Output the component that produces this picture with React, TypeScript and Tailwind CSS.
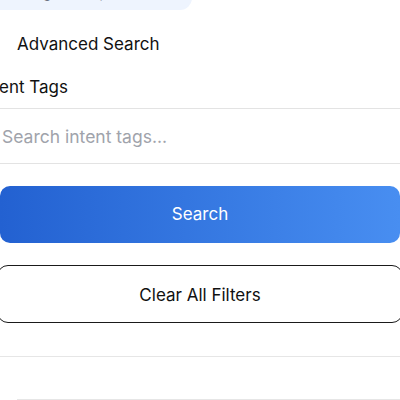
export default function App() {
  return (
    <div className="w-[400px] h-[400px] overflow-hidden bg-white font-['Inter',sans-serif] text-[#111111]">
      <div className="-mt-[14px] -ml-[20px] w-[212px] h-[24px] rounded-br-[14px] rounded-tr-[14px] bg-[#eef4fe] flex items-start pl-[52px] text-[13px] leading-[15px] whitespace-nowrap text-gray-500">
        e.g., Startup, SaaS
      </div>

      <div className="mt-[22px] pl-[17px] text-[17px] leading-[24px]">Advanced Search</div>

      <div className="mt-[19px] -ml-[21px] text-[17px] leading-[24px]">Intent Tags</div>

      <input
        className="mt-[9px] block w-full h-[56px] border-y border-[#e3e3e3] bg-white pl-[2px] text-[17.5px] placeholder:text-[#a0a3ab] outline-none"
        placeholder="Search intent tags..."
      />

      <button className="mt-[22px] block w-[400px] h-[57px] rounded-[10px] bg-gradient-to-r from-[#2361d1] to-[#488ef1] text-white text-[17px]">
        Search
      </button>

      <button className="mt-[22px] -ml-[3px] block w-[406px] h-[58px] rounded-[11px] border-[1.5px] border-[#1a1a1a] bg-white pt-[3px] text-[17px]">
        Clear All Filters
      </button>

      <div className="mt-[33px] h-px bg-[#e6e6e6]" />
      <div className="mt-[42px] ml-[17px] h-px bg-[#e6e6e6]" />
    </div>
  );
}
